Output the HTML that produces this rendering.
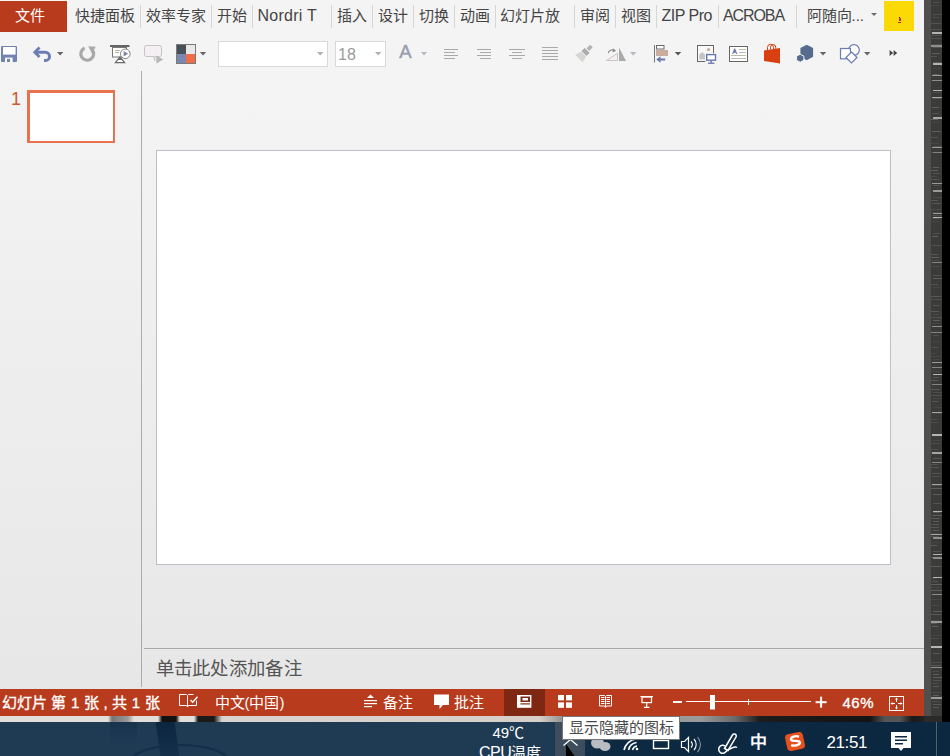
<!DOCTYPE html>
<html lang="zh-CN">
<head>
<meta charset="utf-8">
<title>PowerPoint</title>
<style>
html,body{margin:0;padding:0;}
body{width:950px;height:756px;overflow:hidden;position:relative;background:#000;font-family:"Liberation Sans",sans-serif;}
.abs{position:absolute;}
#desk{left:0;top:0;width:950px;height:756px;background:#000;overflow:hidden;}
#win{left:0;top:0;width:924px;height:716px;background:#f4f4f4;overflow:hidden;}
#work{left:0;top:71px;width:924px;height:618px;background:linear-gradient(#f4f4f4,#e7e7e7);}
.menu{top:0;height:32px;line-height:31px;font-size:15px;color:#444;white-space:nowrap;}
.lat{font-size:16px;}
.sep{top:5px;width:1px;height:23px;background:#d6d6d6;}
#file{left:0;top:1px;width:67px;height:31px;background:#b83b1d;color:#fff;text-indent:14.5px;line-height:30px;font-size:15px;}
#status{left:0;top:689px;width:924px;height:27px;background:#b83b1d;color:#fff;font-size:15px;line-height:27px;white-space:nowrap;}
.tri{width:0;height:0;border-left:3.300px solid transparent;border-right:3.300px solid transparent;border-top:3.600px solid #6a6a6a;}
#task{left:0;top:722px;width:950px;height:34px;background:linear-gradient(90deg,#1f3b54 0,#1f3b54 550px,#0e2a43 600px,#0c2840 950px);overflow:hidden;}
#tex{background:#3b3b3a;}
</style>
</head>
<body>
<div id="desk" class="abs">
  <div class="abs" style="left:924px;top:0;width:7px;height:717px;background:#4f4f4d"></div>
  <div class="abs" id="tex" style="left:931px;top:0;width:11px;height:716px"><svg class="abs" style="left:0;top:0" width="11" height="722" viewBox="0 0 11 722"><rect x="2" y="2" width="6" height="1" fill="#525252"/><rect x="0" y="5" width="8" height="1" fill="#464646"/><rect x="2" y="14" width="9" height="1" fill="#4c4c4c"/><rect x="2" y="17" width="6" height="1" fill="#4c4c4c"/><rect x="0" y="23" width="10" height="1" fill="#525252"/><rect x="0" y="29" width="10" height="1" fill="#525252"/><rect x="0" y="35" width="10" height="1" fill="#525252"/><rect x="0" y="38" width="10" height="1" fill="#525252"/><rect x="0" y="44" width="10" height="1" fill="#4c4c4c"/><rect x="2" y="47" width="9" height="1" fill="#525252"/><rect x="1" y="53" width="8" height="1" fill="#5e5e5e"/><rect x="0" y="56" width="6" height="1" fill="#525252"/><rect x="2" y="62" width="8" height="1" fill="#585858"/><rect x="2" y="68" width="7" height="1" fill="#464646"/><rect x="2" y="74" width="6" height="1" fill="#5e5e5e"/><rect x="1" y="80" width="8" height="1" fill="#464646"/><rect x="1" y="92" width="9" height="1" fill="#4c4c4c"/><rect x="2" y="98" width="8" height="1" fill="#585858"/><rect x="1" y="107" width="7" height="1" fill="#5e5e5e"/><rect x="1" y="113" width="7" height="1" fill="#525252"/><rect x="0" y="119" width="7" height="1" fill="#5e5e5e"/><rect x="1" y="122" width="7" height="1" fill="#464646"/><rect x="1" y="131" width="9" height="1" fill="#5e5e5e"/><rect x="0" y="137" width="7" height="1" fill="#525252"/><rect x="0" y="143" width="8" height="1" fill="#464646"/><rect x="2" y="146" width="8" height="1" fill="#525252"/><rect x="0" y="152" width="9" height="1" fill="#525252"/><rect x="2" y="167" width="6" height="1" fill="#5e5e5e"/><rect x="0" y="170" width="7" height="1" fill="#5e5e5e"/><rect x="2" y="173" width="7" height="1" fill="#525252"/><rect x="0" y="176" width="6" height="1" fill="#464646"/><rect x="0" y="179" width="8" height="1" fill="#525252"/><rect x="2" y="185" width="7" height="1" fill="#525252"/><rect x="2" y="197" width="9" height="1" fill="#4c4c4c"/><rect x="0" y="200" width="7" height="1" fill="#585858"/><rect x="1" y="203" width="9" height="1" fill="#585858"/><rect x="0" y="209" width="10" height="1" fill="#4c4c4c"/><rect x="0" y="212" width="10" height="1" fill="#464646"/><rect x="1" y="215" width="10" height="1" fill="#4c4c4c"/><rect x="1" y="218" width="7" height="1" fill="#525252"/><rect x="1" y="221" width="7" height="1" fill="#464646"/><rect x="2" y="233" width="7" height="1" fill="#525252"/><rect x="1" y="236" width="6" height="1" fill="#5e5e5e"/><rect x="1" y="245" width="9" height="1" fill="#525252"/><rect x="0" y="254" width="7" height="1" fill="#585858"/><rect x="0" y="257" width="8" height="1" fill="#5e5e5e"/><rect x="0" y="260" width="9" height="1" fill="#464646"/><rect x="0" y="266" width="9" height="1" fill="#4c4c4c"/><rect x="2" y="275" width="8" height="1" fill="#525252"/><rect x="2" y="278" width="9" height="1" fill="#5e5e5e"/><rect x="0" y="284" width="7" height="1" fill="#525252"/><rect x="2" y="287" width="7" height="1" fill="#464646"/><rect x="0" y="296" width="10" height="1" fill="#585858"/><rect x="0" y="299" width="11" height="1" fill="#4c4c4c"/><rect x="2" y="305" width="7" height="1" fill="#525252"/><rect x="0" y="311" width="8" height="1" fill="#585858"/><rect x="1" y="314" width="8" height="1" fill="#464646"/><rect x="0" y="317" width="11" height="1" fill="#525252"/><rect x="2" y="320" width="7" height="1" fill="#5e5e5e"/><rect x="0" y="323" width="9" height="1" fill="#464646"/><rect x="2" y="335" width="6" height="1" fill="#525252"/><rect x="2" y="341" width="6" height="1" fill="#464646"/><rect x="1" y="347" width="6" height="1" fill="#525252"/><rect x="0" y="353" width="6" height="1" fill="#464646"/><rect x="0" y="356" width="11" height="1" fill="#464646"/><rect x="2" y="359" width="7" height="1" fill="#464646"/><rect x="0" y="371" width="9" height="1" fill="#464646"/><rect x="2" y="374" width="9" height="1" fill="#4c4c4c"/><rect x="2" y="377" width="6" height="1" fill="#525252"/><rect x="0" y="380" width="7" height="1" fill="#585858"/><rect x="0" y="389" width="9" height="1" fill="#585858"/><rect x="2" y="392" width="9" height="1" fill="#4c4c4c"/><rect x="0" y="395" width="11" height="1" fill="#525252"/><rect x="2" y="398" width="8" height="1" fill="#464646"/><rect x="1" y="401" width="6" height="1" fill="#585858"/><rect x="2" y="407" width="9" height="1" fill="#464646"/><rect x="1" y="413" width="10" height="1" fill="#464646"/><rect x="0" y="419" width="6" height="1" fill="#525252"/><rect x="0" y="422" width="8" height="1" fill="#4c4c4c"/><rect x="2" y="440" width="8" height="1" fill="#464646"/><rect x="0" y="443" width="9" height="1" fill="#4c4c4c"/><rect x="0" y="449" width="8" height="1" fill="#4c4c4c"/><rect x="0" y="452" width="8" height="1" fill="#525252"/><rect x="2" y="458" width="8" height="1" fill="#585858"/><rect x="0" y="464" width="7" height="1" fill="#525252"/><rect x="0" y="467" width="8" height="1" fill="#525252"/><rect x="1" y="473" width="9" height="1" fill="#525252"/><rect x="1" y="476" width="8" height="1" fill="#525252"/><rect x="0" y="485" width="10" height="1" fill="#4c4c4c"/><rect x="0" y="488" width="11" height="1" fill="#5e5e5e"/><rect x="2" y="494" width="8" height="1" fill="#5e5e5e"/><rect x="2" y="503" width="8" height="1" fill="#525252"/><rect x="2" y="512" width="7" height="1" fill="#585858"/><rect x="1" y="515" width="10" height="1" fill="#5e5e5e"/><rect x="0" y="518" width="9" height="1" fill="#585858"/><rect x="2" y="521" width="6" height="1" fill="#585858"/><rect x="1" y="524" width="7" height="1" fill="#585858"/><rect x="0" y="527" width="8" height="1" fill="#585858"/><rect x="2" y="530" width="6" height="1" fill="#585858"/><rect x="0" y="533" width="7" height="1" fill="#464646"/><rect x="0" y="536" width="8" height="1" fill="#4c4c4c"/><rect x="0" y="542" width="9" height="1" fill="#464646"/><rect x="0" y="545" width="6" height="1" fill="#585858"/><rect x="2" y="551" width="8" height="1" fill="#525252"/><rect x="0" y="557" width="6" height="1" fill="#585858"/><rect x="0" y="566" width="10" height="1" fill="#5e5e5e"/><rect x="0" y="578" width="6" height="1" fill="#464646"/><rect x="1" y="581" width="6" height="1" fill="#525252"/><rect x="0" y="584" width="11" height="1" fill="#5e5e5e"/><rect x="0" y="587" width="9" height="1" fill="#464646"/><rect x="0" y="590" width="11" height="1" fill="#5e5e5e"/><rect x="0" y="599" width="11" height="1" fill="#464646"/><rect x="1" y="605" width="7" height="1" fill="#4c4c4c"/><rect x="2" y="611" width="9" height="1" fill="#5e5e5e"/><rect x="0" y="614" width="10" height="1" fill="#585858"/><rect x="0" y="620" width="8" height="1" fill="#464646"/><rect x="0" y="623" width="6" height="1" fill="#585858"/><rect x="1" y="626" width="6" height="1" fill="#5e5e5e"/><rect x="1" y="635" width="9" height="1" fill="#464646"/><rect x="0" y="638" width="8" height="1" fill="#4c4c4c"/><rect x="0" y="647" width="10" height="1" fill="#5e5e5e"/><rect x="2" y="653" width="7" height="1" fill="#585858"/><rect x="0" y="662" width="11" height="1" fill="#4c4c4c"/><rect x="0" y="665" width="10" height="1" fill="#585858"/><rect x="1" y="671" width="7" height="1" fill="#4c4c4c"/><rect x="2" y="674" width="6" height="1" fill="#5e5e5e"/><rect x="2" y="677" width="9" height="1" fill="#5e5e5e"/><rect x="2" y="680" width="8" height="1" fill="#525252"/><rect x="1" y="683" width="6" height="1" fill="#4c4c4c"/><rect x="2" y="686" width="6" height="1" fill="#585858"/><rect x="1" y="692" width="8" height="1" fill="#4c4c4c"/><rect x="2" y="695" width="6" height="1" fill="#5e5e5e"/><rect x="1" y="698" width="6" height="1" fill="#5e5e5e"/><rect x="1" y="701" width="7" height="1" fill="#4c4c4c"/><rect x="2" y="704" width="8" height="1" fill="#585858"/><rect x="2" y="707" width="6" height="1" fill="#585858"/><rect x="1" y="32" width="10" height="2" fill="#b4b4b4"/><rect x="0" y="45" width="11" height="2" fill="#8e8e8e"/><rect x="2" y="63" width="9" height="2" fill="#b4b4b4"/><rect x="1" y="75" width="10" height="1" fill="#9a9a9a"/><rect x="1" y="80" width="10" height="1" fill="#8e8e8e"/><rect x="2" y="90" width="9" height="1" fill="#b4b4b4"/><rect x="1" y="97" width="10" height="1" fill="#a6a6a6"/><rect x="2" y="117" width="9" height="2" fill="#a6a6a6"/><rect x="1" y="147" width="10" height="1" fill="#9a9a9a"/><rect x="2" y="152" width="9" height="1" fill="#848484"/><rect x="1" y="183" width="10" height="1" fill="#9a9a9a"/><rect x="2" y="190" width="9" height="2" fill="#9a9a9a"/><rect x="2" y="213" width="9" height="1" fill="#9a9a9a"/><rect x="2" y="217" width="9" height="1" fill="#b4b4b4"/><rect x="1" y="262" width="10" height="1" fill="#848484"/><rect x="1" y="326" width="10" height="1" fill="#8e8e8e"/><rect x="0" y="332" width="11" height="1" fill="#848484"/><rect x="1" y="362" width="10" height="1" fill="#9a9a9a"/><rect x="1" y="367" width="10" height="1" fill="#848484"/><rect x="2" y="374" width="9" height="1" fill="#b4b4b4"/><rect x="1" y="384" width="10" height="1" fill="#848484"/><rect x="1" y="412" width="10" height="1" fill="#a6a6a6"/><rect x="1" y="434" width="10" height="2" fill="#b4b4b4"/><rect x="1" y="452" width="10" height="2" fill="#a6a6a6"/><rect x="1" y="462" width="10" height="1" fill="#848484"/><rect x="1" y="484" width="10" height="1" fill="#a6a6a6"/><rect x="2" y="511" width="9" height="1" fill="#b4b4b4"/><rect x="0" y="534" width="11" height="1" fill="#a6a6a6"/><rect x="2" y="537" width="9" height="2" fill="#8e8e8e"/><rect x="2" y="554" width="9" height="1" fill="#b4b4b4"/><rect x="2" y="557" width="9" height="2" fill="#8e8e8e"/><rect x="2" y="577" width="9" height="1" fill="#b4b4b4"/><rect x="1" y="594" width="10" height="1" fill="#8e8e8e"/><rect x="0" y="621" width="11" height="2" fill="#9a9a9a"/><rect x="0" y="646" width="11" height="2" fill="#b4b4b4"/><rect x="0" y="667" width="11" height="1" fill="#8e8e8e"/><rect x="0" y="697" width="11" height="2" fill="#9a9a9a"/></svg></div>
  <div class="abs" style="left:924px;top:716px;width:18px;height:6px;background:#2a2a2a"></div>
  <div class="abs" style="left:0;top:716px;width:924px;height:6px;background:linear-gradient(90deg,#e2dedb 0,#e2dedb 108px,#777 112px,#999 128px,#e2dedb 134px,#e2dedb 158px,#111 162px,#111 176px,#e2dedb 180px,#e2dedb 194px,#1a1a1a 198px,#1a1a1a 214px,#d8d4d0 222px,#d6cec8 540px,#8b8b8b 565px,#9a9a9a 700px,#6a6a6a 735px,#1c1c1c 760px,#141414 870px,#555 885px,#555 900px,#1a1a1a 912px,#222 924px)"></div>
  <div id="task" class="abs">
    <div class="abs" style="left:110px;top:0;width:27px;height:22px;background:linear-gradient(#18324c,#1f3b54)"></div>
    <div class="abs" style="left:158px;top:0;width:19px;height:34px;background:linear-gradient(#0c2540,#14304b);transform:skewX(8deg)"></div>
    <div class="abs" style="left:128px;top:22px;width:104px;height:40px;border:2px solid #142e48;border-radius:50%;box-sizing:border-box"></div>
    <div class="abs" style="left:555px;top:0;width:30px;height:34px;background:#3d4d5b"></div>
    <div class="abs" style="left:492.500px;top:1px;font-size:15px;line-height:20px;color:#fff;white-space:nowrap">49℃</div>
    <div class="abs" style="left:479px;top:21px;font-size:15px;line-height:20px;color:#fff;white-space:nowrap"><span style="font-size:16px;letter-spacing:-.5px">CPU</span>温度</div>
    <div class="abs" style="left:750px;top:10px;font-size:17px;line-height:22px;font-weight:bold;color:#fff">中</div>
    <div class="abs" style="left:826.500px;top:10px;font-size:17px;line-height:22px;color:#fff;letter-spacing:-.4px">21:51</div>
    <div class="abs" style="left:936px;top:0;width:1px;height:34px;background:#56636f"></div>
    <svg class="abs" style="left:0;top:0" width="950" height="34" viewBox="0 722 950 34">
      <!-- chevron -->
      <path d="M563.500 745.500l7-6 7 6" fill="none" stroke="#fff" stroke-width="1.300"/>
      <!-- cursor -->
      <path d="M566 744v12h8.500z" fill="#000"/>
      <!-- wechat -->
      <g fill="#b9bcc0"><ellipse cx="597.500" cy="743" rx="6.500" ry="5.500"/><ellipse cx="605" cy="746.500" rx="5.500" ry="4.500"/></g>
      <!-- wifi -->
      <g fill="none" stroke="#fff" stroke-width="1.500">
        <path d="M624 750a14 14 0 0 1 12-11"/><path d="M628.500 750a9.500 9.500 0 0 1 8-7.500"/><path d="M632.500 750a5.500 5.500 0 0 1 4.500-4"/>
      </g>
      <circle cx="637" cy="749" r="1.300" fill="#fff"/>
      <!-- battery -->
      <rect x="653.500" y="740.500" width="15" height="8" fill="none" stroke="#fff" stroke-width="1.400"/>
      <rect x="656" y="737" width="10" height="3" fill="#fff"/>
      <!-- volume -->
      <path d="M681.500 741.500h3l4-4v14l-4-4h-3z" fill="none" stroke="#fff" stroke-width="1.200"/>
      <path d="M691 741.500a4 4 0 0 1 0 6M694 739a8 8 0 0 1 0 11" fill="none" stroke="#fff" stroke-width="1.100"/>
      <path d="M697.500 737a11 11 0 0 1 0 15" fill="none" stroke="#8a949e" stroke-width="1.100"/>
      <!-- pen -->
      <g fill="none" stroke="#fff" stroke-width="1.500">
        <path d="M724.500 748.500l8-13.500a2 2 0 0 1 3.500 2l-8 13.500z"/>
        <path d="M725 746a4 4 0 1 0 1 5.500c3-2 8-6 11-4"/>
      </g>
      <!-- sogou -->
      <g transform="rotate(-12 795 741.500)">
        <rect x="786" y="733" width="18" height="17" rx="3.500" fill="#e8511e"/>
        <path d="M800 737.500c-3-1.800-8.500-1.500-8.500 1.200 0 3 8 1.500 8 4.600 0 2.700-5.500 3-9 1" fill="none" stroke="#fff" stroke-width="2.400"/>
      </g>
      <!-- notif -->
      <path d="M891 732h20v16h-7.500l-2.500 3-2.500-3h-7.500z" fill="#fff"/>
      <g fill="#0c2840"><rect x="895" y="736" width="12" height="1.500"/><rect x="895" y="739.500" width="12" height="1.500"/><rect x="895" y="743" width="8" height="1.500"/></g>
    </svg>
  </div>
  <div class="abs" style="left:562px;top:716px;width:116px;height:22px;background:#fff;border:1px solid #767676"></div>
  <div class="abs" style="left:568.500px;top:717px;font-size:15px;line-height:22px;color:#4a4a4a;white-space:nowrap;z-index:5">显示隐藏的图标</div>
</div>
<div id="win" class="abs">
  <div id="file" class="abs">文件</div>
  <div class="menu abs" style="left:74.5px">快捷面板</div>
  <div class="menu abs" style="left:145.5px">效率专家</div>
  <div class="menu abs" style="left:216.5px">开始</div>
  <div class="menu abs lat" style="left:257.500px;letter-spacing:.250px">Nordri T</div>
  <div class="menu abs" style="left:336.5px">插入</div>
  <div class="menu abs" style="left:377.5px">设计</div>
  <div class="menu abs" style="left:418.5px">切换</div>
  <div class="menu abs" style="left:459.5px">动画</div>
  <div class="menu abs" style="left:499.5px">幻灯片放</div>
  <div class="menu abs" style="left:579.5px">审阅</div>
  <div class="menu abs" style="left:620.5px">视图</div>
  <div class="menu abs lat" style="left:661.500px;letter-spacing:-.500px">ZIP Pro</div>
  <div class="menu abs lat" style="left:723px;letter-spacing:-1.100px">ACROBA</div>
  <div class="menu abs" style="left:806.5px">阿随向...</div>
  <div class="sep abs" style="left:140px"></div>
  <div class="sep abs" style="left:211px"></div>
  <div class="sep abs" style="left:252px"></div>
  <div class="sep abs" style="left:331px"></div>
  <div class="sep abs" style="left:372px"></div>
  <div class="sep abs" style="left:413px"></div>
  <div class="sep abs" style="left:454px"></div>
  <div class="sep abs" style="left:495px"></div>
  <div class="sep abs" style="left:574px"></div>
  <div class="sep abs" style="left:615px"></div>
  <div class="sep abs" style="left:656px"></div>
  <div class="sep abs" style="left:718px"></div>
  <div class="sep abs" style="left:796px"></div>
  <div class="abs" style="left:884px;top:1px;width:30px;height:30px;background:#fad905"><div class="abs" style="left:14.600px;top:15.600px;width:1.400px;height:1.400px;background:#3a1a10"></div><div class="abs" style="left:14.600px;top:17.200px;width:2px;height:3px;background:#c0301a"></div><div class="abs" style="left:14.400px;top:21px;width:2.600px;height:1px;background:#b5301a"></div></div>
  <div class="abs tri" style="left:870.600px;top:12.700px"></div>
  <svg class="abs" style="left:0;top:36px" width="924" height="36" viewBox="0 36 924 36">
    <!-- save -->
    <g>
      <rect x="1" y="46" width="16" height="16" rx="1" fill="#7482b2"/>
      <rect x="3" y="47" width="12.6" height="7.6" fill="#fff"/>
      <rect x="5" y="57.6" width="7.6" height="4.4" fill="#fff"/>
      <rect x="7" y="58.8" width="3" height="3.2" fill="#7482b2"/>
    </g>
    <!-- undo -->
    <g fill="none" stroke="#6c7db3">
      <path d="M36 52.300h9.400a4.100 4.100 0 0 1 0 8.200h-1.400" stroke-width="3"/>
      <path d="M39.500 47.600l-4.700 4.700 4.700 4.700" stroke-width="2.800"/>
    </g>
    <path d="M57 52h6.4l-3.2 3.6z" fill="#666"/>
    <!-- redo -->
    <path d="M84.600 48a6.400 6.400 0 1 0 7.600 1.800" fill="none" stroke="#a9a9a9" stroke-width="3.200"/>
    <path d="M88.200 46.300l7.600.5-3.800 6.800z" fill="#a9a9a9"/>
    <!-- slideshow -->
    <g>
      <rect x="110" y="45" width="19.5" height="2" fill="#666"/>
      <rect x="112.5" y="47.5" width="14" height="9.5" fill="#fff" stroke="#777" stroke-width="1"/>
      <rect x="115" y="50" width="5" height="1" fill="#bdb3a6"/>
      <rect x="115" y="52" width="4" height="1" fill="#bdb3a6"/>
      <path d="M120 57l4.6 5.6h-9.2z" fill="#fff" stroke="#6a6a6a" stroke-width="1.2"/>
      <path d="M120 57l2.4 3h-4.8z" fill="#6a6a6a"/>
      <circle cx="125.300" cy="53.800" r="4.800" fill="#fff" stroke="#808080" stroke-width="1"/>
      <path d="M123.600 51l4.600 2.800-4.600 2.800z" fill="#7e84a8"/>
    </g>
    <!-- comment -->
    <g>
      <path d="M146.5 45.5h13a2 2 0 0 1 2 2v7a2 2 0 0 1-2 2h-4.800v4.500l-0.800-4.500h-7.400a2 2 0 0 1-2-2v-7a2 2 0 0 1 2-2z" fill="#f4eff3" stroke="#c4c4c4" stroke-width="1"/>
      <path d="M156.400 55.500l6.800 4-6.800 4z" fill="#b7b7b7"/>
    </g>
    <!-- theme colors -->
    <g>
      <rect x="176" y="44" width="20" height="20" fill="#7a7a7a"/>
      <rect x="177" y="45" width="9" height="9" fill="#474f59"/>
      <rect x="186" y="45" width="9" height="9" fill="#e8e8e8"/>
      <rect x="177" y="54" width="9" height="9" fill="#7b87b0"/>
      <rect x="186" y="54" width="9" height="9" fill="#ef6e49"/>
    </g>
    <path d="M199.8 52h6.4l-3.2 3.6z" fill="#666"/>
    <!-- font box -->
    <rect x="218.500" y="41.500" width="109" height="25" fill="#fff" stroke="#d9d9d9"/>
    <path d="M317 52h6.4l-3.2 3.6z" fill="#b0b0b0"/>
    <rect x="335.500" y="41.500" width="50" height="25" fill="#fff" stroke="#d9d9d9"/>
    <path d="M375 52h6.4l-3.2 3.6z" fill="#b0b0b0"/>
    <!-- font color A -->
    <path d="M420.8 52h6.4l-3.2 3.6z" fill="#b9bac4"/>
    <!-- align icons -->
    <g fill="#a9a9a9">
      <rect x="444" y="49" width="14" height="1"/><rect x="444" y="52" width="11" height="1"/><rect x="444" y="55" width="14" height="1"/><rect x="444" y="58" width="11" height="1"/>
      <rect x="477" y="49" width="14" height="1"/><rect x="480" y="52" width="11" height="1"/><rect x="477" y="55" width="14" height="1"/><rect x="480" y="58" width="11" height="1"/>
      <rect x="509" y="49" width="16" height="1"/><rect x="512" y="52" width="10" height="1"/><rect x="509" y="55" width="16" height="1"/><rect x="512" y="58" width="10" height="1"/>
      <rect x="542" y="47" width="16" height="1"/><rect x="542" y="50" width="16" height="1"/><rect x="542" y="53" width="16" height="1"/><rect x="542" y="56" width="16" height="1"/><rect x="542" y="59" width="16" height="1"/>
    </g>
    <!-- format painter -->
    <g transform="rotate(-45 584 53.500)">
      <rect x="589.500" y="51.700" width="5" height="3.600" fill="#b3b3b3"/>
      <rect x="584" y="50" width="4.400" height="7" fill="#ababab"/>
      <path d="M583.400 50v7l-6.600 1.800v-10.600z" fill="#d8d5d3"/>
    </g>
    <!-- rotate -->
    <g>
      <path d="M606.500 60.500h11v-7.300z" fill="#f4eff2" stroke="#cdc3c0" stroke-width="1"/>
      <path d="M619 61v-13.400l7 13.400z" fill="#a9a9a9"/>
      <path d="M608.300 53.200a4 3.600 0 0 1 6.400-2.600" fill="none" stroke="#8a8a8a" stroke-width="1.100"/>
      <path d="M613 48.300l3.200 2.600-3.600 1.300z" fill="#8a8a8a"/>
    </g>
    <path d="M630 52h6.4l-3.2 3.6z" fill="#b4b8c0"/>
    <!-- align objects -->
    <g>
      <rect x="654" y="45" width="1" height="17.500" fill="#777"/>
      <rect x="656.500" y="45.500" width="7.500" height="3.500" fill="#fff" stroke="#6a6a6a"/>
      <rect x="656" y="50" width="12" height="6" fill="#c9ad9f"/>
      <path d="M656.300 59.500l4.200-3.300v2.200h4.700v2.200h-4.700v2.200z" fill="#6878ab"/>
    </g>
    <path d="M674.8 52h6.4l-3.2 3.6z" fill="#555"/>
    <!-- picture -->
    <g>
      <rect x="697.500" y="45.500" width="16" height="16" fill="#f8f8f8" stroke="#666"/>
      <circle cx="708.500" cy="49.600" r="1.700" fill="#c9ad9f"/>
      <path d="M699.300 59.500v-5l2.800-2.600 2.800 2.600v5z" fill="#c1c5c9"/>
      <rect x="705.300" y="53.300" width="11.500" height="11" fill="#f4f4f4"/>
      <rect x="706.700" y="54.600" width="8.800" height="5.600" fill="#fff" stroke="#6878ab" stroke-width="1.400"/>
      <rect x="710.400" y="60.500" width="1.400" height="2.500" fill="#6878ab"/>
      <rect x="708" y="62.600" width="6.400" height="1.300" fill="#6878ab"/>
    </g>
    <!-- textbox -->
    <g>
      <rect x="729.500" y="46.500" width="18" height="15" fill="#fff" stroke="#666"/>
      <path d="M732 54l2.300-5.500h.8l2.300 5.500h-1.200l-.5-1.300h-2.100l-.5 1.300z" fill="#6b78b0"/>
      <g fill="#bcbcae"><rect x="739" y="49" width="7" height="1"/><rect x="739" y="52" width="7" height="1"/><rect x="731" y="55" width="15" height="1"/><rect x="731" y="58" width="15" height="1"/></g>
    </g>
    <!-- store bag -->
    <g>
      <path d="M764 50.600l16-2.600v15.600l-16-2.600z" fill="#d83f11"/>
      <path d="M767.500 50v-2.500a3 3.200 0 0 1 6 0v2" fill="none" stroke="#d83f11" stroke-width="1"/>
      <path d="M770.500 49.400v-2.200a2.600 2.600 0 0 1 5.200 0v1.600" fill="none" stroke="#d83f11" stroke-width="1"/>
    </g>
    <!-- 3d -->
    <g>
      <path d="M806.700 44.800l6.400 3.300v8.600l-6.400 3.500-6.300-3.500v-8.600z" fill="#566c8e"/>
      <path d="M800.200 54.200l3.700 2v4l-3.700 2-3.700-2v-4z" fill="#566c8e" stroke="#f4f4f4" stroke-width="1"/>
    </g>
    <path d="M819.8 52h6.4l-3.2 3.6z" fill="#666"/>
    <!-- shapes -->
    <g fill="#fff" stroke="#6a7db2" stroke-width="1.200">
      <circle cx="854" cy="50" r="5.300"/>
      <rect x="840.500" y="48.500" width="10" height="10.300"/>
      <path d="M851.500 52l5.500 5.500-5.500 5.500-5.500-5.500z"/>
    </g>
    <path d="M864 52h6.4l-3.2 3.6z" fill="#666"/>
    <path d="M889.600 50l3.600 3-3.600 3zM893.600 50l3.600 3-3.600 3z" fill="#444"/>
  </svg>
  <div class="abs" style="left:338px;top:43.500px;font-size:16px;line-height:22px;color:#9a9a9a">18</div>
  <div class="abs" style="left:399.200px;top:41px;font-size:18.500px;line-height:22px;color:#989cb0;-webkit-text-stroke:.500px #989cb0">A</div>
  <div id="work" class="abs">
    <div class="abs" style="left:141px;top:0;width:1px;height:616px;background:#ababab"></div>
    <div class="abs" style="left:11px;top:17px;font-size:18px;line-height:22px;color:#d2562c">1</div>
    <div class="abs" style="left:27px;top:19px;width:88px;height:53px;background:#e9714d"><div class="abs" style="left:2.500px;top:2.500px;width:83px;height:48px;background:#fff"></div></div>
    <div class="abs" style="left:156px;top:79px;width:733px;height:413px;background:#fff;border:1px solid #bcc0c6"></div>
    <div class="abs" style="left:144px;top:577px;width:780px;height:1px;background:#a9a9a9"></div>
    <div class="abs" style="left:155.500px;top:586px;font-size:18.400px;letter-spacing:.300px;line-height:24px;color:#555;white-space:nowrap">单击此处添加备注</div>
  </div>
  <div id="status" class="abs">
    <span class="abs" style="left:1.500px;letter-spacing:.200px;-webkit-text-stroke:.350px #fff">幻灯片 第 1 张 , 共 1 张</span>
    <span class="abs" style="left:214.500px">中文(中国)</span>
    <span class="abs" style="left:383px">备注</span>
    <span class="abs" style="left:454px">批注</span>
    <span class="abs" style="left:842.500px;letter-spacing:.500px;-webkit-text-stroke:.350px #fff">46%</span>
    <div class="abs" style="left:504px;top:0;width:41px;height:27px;background:#7e2813"></div>
    <svg class="abs" style="left:0;top:0" width="924" height="27" viewBox="0 689 924 27">
      <!-- spell -->
      <g fill="none" stroke="#fff" stroke-width="1">
        <path d="M187.500 695.500v11M187.500 695.500l-1-1h-7v11h7l1 1.500 1-1.500h8v-5M187.500 695.500l1-1h5"/>
        <path d="M190.500 700l2.200 2.200 4.800-5.400" stroke-width="1.500"/>
      </g>
      <!-- notes -->
      <g fill="#fff">
        <path d="M370.500 694.500l3.500 3.500h-7z"/>
        <rect x="364" y="700" width="13" height="1.200"/><rect x="364" y="703" width="13" height="1.200"/><rect x="364" y="706" width="8" height="1.200"/>
      </g>
      <!-- comments -->
      <path d="M434 694.500h15v10.500h-6l-3.500 4v-4h-5.500z" fill="#fff"/>
      <!-- normal view -->
      <g>
        <rect x="517" y="695" width="14.400" height="12.800" fill="#fff"/>
        <rect x="520.500" y="696.500" width="9.500" height="5.500" fill="#7e2813"/>
        <rect x="522.500" y="698" width="5.500" height="2.500" fill="#fff"/>
        <rect x="520.500" y="703.300" width="9.500" height="1.200" fill="#7e2813"/>
      </g>
      <!-- sorter -->
      <g fill="#fff"><rect x="558" y="695" width="6" height="5.400"/><rect x="566" y="695" width="6" height="5.400"/><rect x="558" y="702.400" width="6" height="5.400"/><rect x="566" y="702.400" width="6" height="5.400"/></g>
      <!-- reading -->
      <g fill="none" stroke="#fff" stroke-width="1">
        <path d="M599.500 695.500h5l1 1 1-1h5v10.500h-5l-1 1.500-1-1.500h-5z"/>
        <path d="M605.500 696.500v10.500M601 697.500h3.500M601 699.500h3.500M601 701.500h3.500M601 703.500h3.500M606.500 697.500h3.500M606.500 699.500h3.500M606.500 701.500h3.500M606.500 703.500h3.500" stroke-width="1"/>
      </g>
      <!-- slideshow -->
      <g fill="none" stroke="#fff" stroke-width="1.200">
        <path d="M640.400 696.600h12.600"/>
        <rect x="642" y="697" width="9.500" height="5.600"/>
        <path d="M646.700 702.600v4.400M644 707.300h5.400"/>
      </g>
      <!-- zoom -->
      <g fill="#fff">
        <rect x="673" y="701" width="9" height="2"/>
        <rect x="686" y="701" width="125" height="1"/>
        <rect x="710" y="695" width="5" height="14.500"/>
        <rect x="748" y="699" width="1" height="6"/>
        <rect x="815.600" y="701.200" width="11" height="2"/><rect x="820.100" y="696.700" width="2" height="11"/>
      </g>
      <!-- fit -->
      <g fill="none" stroke="#fff" stroke-width="1">
        <rect x="889.500" y="696.500" width="14" height="14"/>
        <path d="M896.500 698v4M896.500 705v4M891 703.500h4M898 703.500h4"/>
      </g>
      <path d="M896.500 697.500l1.500 2h-3zM896.500 709.500l1.500-2h-3zM890.500 703.500l2-1.500v3zM902.500 703.500l-2-1.500v3z" fill="#fff"/>
    </svg>
  </div>
</div>
</body>
</html>
